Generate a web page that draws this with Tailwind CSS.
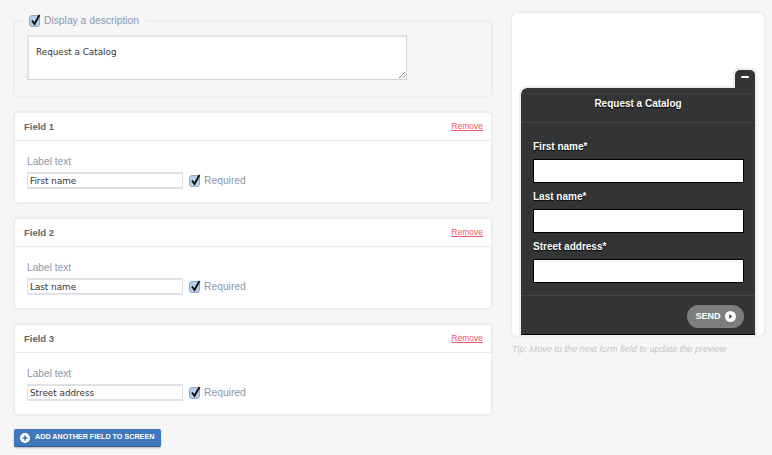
<!DOCTYPE html>
<html lang="en">
<head>
  <meta charset="UTF-8">
  <title>Request a Catalog</title>
  <script src="https://cdn.jsdelivr.net/npm/@tailwindcss/browser@4"></script>
</head>
<body class="bg-[#f6f6f6] font-['Liberation_Sans',sans-serif] overflow-hidden">
  <div class="w-[772px] h-[455px] flex items-start pl-[13px] pt-[13px] overflow-hidden">

    <!-- left column -->
    <div class="w-[480px] shrink-0">
      <fieldset class="border-2 border-[#eceef0] rounded-[5px] h-[85px] px-[12px]">
        <legend class="ml-[-4px] px-[6px] flex items-center h-[16px] text-[10.3px] text-[#8a97ae]">
          <span class="w-[11px] h-[12px] rounded-[3px] bg-[#b5d0ee] border border-[#8fa9c9] relative mr-[4px]">
            <svg class="absolute left-[0px] top-[-3px]" width="13" height="14" viewBox="0 0 13 14"><path d="M2 7.5 L4.5 11 L9.5 2" fill="none" stroke="#111" stroke-width="2"/></svg>
          </span>
          Display a description
        </legend>
        <div class="relative w-[380px] h-[45px] mt-[6px] bg-white border-2 border-[#e2e4e7] border-r-[#cfd2d6] border-b-[#cfd2d6] border-r border-b font-['DejaVu_Sans',sans-serif] text-[8.8px] text-[#333] pl-[7px] pt-[9px]">
          Request a Catalog
          <svg class="absolute right-0 bottom-0" width="8" height="8" viewBox="0 0 8 8"><path d="M1 7 L7 1 M4.5 7 L7 4.5" stroke="#888" stroke-width="1"/></svg>
        </div>
      </fieldset>

      <div class="flex flex-col gap-[13px] mt-[13px]">
        <section class="h-[93px] bg-white border-2 border-[#eceef0] rounded-[5px]">
          <div class="h-[28px] border-b border-[#e8eaed] flex items-center justify-between pl-[9px] pr-[8px]">
            <span class="text-[9.5px] font-bold text-[#666] pt-[1px]">Field 1</span>
            <a class="text-[8.5px] text-[#ee5566] underline">Remove</a>
          </div>
          <div class="pl-[12px] pt-[14px]">
            <div class="text-[10.2px] leading-[13px] text-[#8a97ae]">Label text</div>
            <div class="flex items-center mt-[4px]">
              <div class="w-[156px] h-[17px] bg-white border-2 border-[#dfe1e4] border-l border-r font-['DejaVu_Sans',sans-serif] text-[8.8px] leading-[13px] text-[#333] pl-[2px] pt-[1px]">First name</div>
              <span class="w-[11px] h-[12px] rounded-[3px] bg-[#b5d0ee] border border-[#8fa9c9] relative ml-[6px] mr-[4px]">
                <svg class="absolute left-[0px] top-[-3px]" width="13" height="14" viewBox="0 0 13 14"><path d="M2 7.5 L4.5 11 L9.5 2" fill="none" stroke="#111" stroke-width="2"/></svg>
              </span>
              <span class="text-[10.3px] text-[#8a97ae]">Required</span>
            </div>
          </div>
        </section>

        <section class="h-[93px] bg-white border-2 border-[#eceef0] rounded-[5px]">
          <div class="h-[28px] border-b border-[#e8eaed] flex items-center justify-between pl-[9px] pr-[8px]">
            <span class="text-[9.5px] font-bold text-[#666] pt-[1px]">Field 2</span>
            <a class="text-[8.5px] text-[#ee5566] underline">Remove</a>
          </div>
          <div class="pl-[12px] pt-[14px]">
            <div class="text-[10.2px] leading-[13px] text-[#8a97ae]">Label text</div>
            <div class="flex items-center mt-[4px]">
              <div class="w-[156px] h-[17px] bg-white border-2 border-[#dfe1e4] border-l border-r font-['DejaVu_Sans',sans-serif] text-[8.8px] leading-[13px] text-[#333] pl-[2px] pt-[1px]">Last name</div>
              <span class="w-[11px] h-[12px] rounded-[3px] bg-[#b5d0ee] border border-[#8fa9c9] relative ml-[6px] mr-[4px]">
                <svg class="absolute left-[0px] top-[-3px]" width="13" height="14" viewBox="0 0 13 14"><path d="M2 7.5 L4.5 11 L9.5 2" fill="none" stroke="#111" stroke-width="2"/></svg>
              </span>
              <span class="text-[10.3px] text-[#8a97ae]">Required</span>
            </div>
          </div>
        </section>

        <section class="h-[93px] bg-white border-2 border-[#eceef0] rounded-[5px]">
          <div class="h-[28px] border-b border-[#e8eaed] flex items-center justify-between pl-[9px] pr-[8px]">
            <span class="text-[9.5px] font-bold text-[#666] pt-[1px]">Field 3</span>
            <a class="text-[8.5px] text-[#ee5566] underline">Remove</a>
          </div>
          <div class="pl-[12px] pt-[14px]">
            <div class="text-[10.2px] leading-[13px] text-[#8a97ae]">Label text</div>
            <div class="flex items-center mt-[4px]">
              <div class="w-[156px] h-[17px] bg-white border-2 border-[#dfe1e4] border-l border-r font-['DejaVu_Sans',sans-serif] text-[8.8px] leading-[13px] text-[#333] pl-[2px] pt-[1px]">Street address</div>
              <span class="w-[11px] h-[12px] rounded-[3px] bg-[#b5d0ee] border border-[#8fa9c9] relative ml-[6px] mr-[4px]">
                <svg class="absolute left-[0px] top-[-3px]" width="13" height="14" viewBox="0 0 13 14"><path d="M2 7.5 L4.5 11 L9.5 2" fill="none" stroke="#111" stroke-width="2"/></svg>
              </span>
              <span class="text-[10.3px] text-[#8a97ae]">Required</span>
            </div>
          </div>
        </section>
      </div>

      <button class="mt-[13px] ml-[1px] w-[147px] h-[18px] rounded-[2px] bg-[#3f78bb] border-b border-[#2c5c96] shadow-[0_1px_2px_rgba(0,0,0,0.25)] flex items-center pl-[6px] text-white text-[7.2px] font-bold whitespace-nowrap">
        <svg class="mr-[5px] shrink-0" width="10" height="10" viewBox="0 0 10 10"><circle cx="5" cy="5" r="5" fill="#fff"/><path d="M5 2.5 V7.5 M2.5 5 H7.5" stroke="#3f78bb" stroke-width="1.6"/></svg>
        ADD ANOTHER FIELD TO SCREEN
      </button>
    </div>

    <!-- preview column -->
    <div class="w-[252px] ml-[19px] shrink-0">
      <div class="relative h-[323px] bg-white rounded-[5px] shadow-[0_0_3px_rgba(0,0,0,0.12)] pl-[9px] pr-[9px] pt-[75px]">
        <div class="relative h-[247px] bg-[#333436] rounded-tl-[6px] border-b border-black outline-2 outline-[#eeeeee] text-white">
          <div class="h-[35px] border-b border-[#444547]">
            <div class="h-[6px] border-b border-[#3f4042]"></div>
            <div class="text-center text-[10px] font-bold pt-[3px] leading-[13px] [text-shadow:0_1px_1px_#000]">Request a Catalog</div>
          </div>
          <div class="pl-[12px] pr-[11px] pt-[17px]">
            <div class="text-[10px] font-bold leading-[13px] [text-shadow:0_1px_1px_#000]">First name*</div>
            <div class="h-[24px] mt-[6px] bg-white border border-black"></div>
            <div class="text-[10px] font-bold leading-[13px] mt-[7px] [text-shadow:0_1px_1px_#000]">Last name*</div>
            <div class="h-[24px] mt-[6px] bg-white border border-black"></div>
            <div class="text-[10px] font-bold leading-[13px] mt-[7px] [text-shadow:0_1px_1px_#000]">Street address*</div>
            <div class="h-[24px] mt-[6px] bg-white border border-black"></div>
          </div>
          <div class="mt-[12px] border-t border-[#444547] flex justify-end pr-[11px] pt-[9px]">
            <div class="w-[57px] h-[23px] rounded-full bg-[#7d7e7e] flex items-center justify-center gap-[4px] text-[9px] font-bold">
              SEND
              <svg width="11" height="11" viewBox="0 0 11 11"><circle cx="5.5" cy="5.5" r="5.5" fill="#fff"/><path d="M4.2 3 L7.4 5.5 L4.2 8 Z" fill="#555"/></svg>
            </div>
          </div>
        </div>
        <!-- minimize tab -->
        <div class="absolute left-[223px] top-[57px] w-[20px] h-[18px] bg-[#333436] rounded-t-[5px] shadow-[0_-2px_0_#eeeeee,-2px_-2px_0_#eeeeee,2px_-2px_0_#eeeeee] flex justify-center pt-[6px]">
          <span class="w-[8px] h-[2px] bg-white rounded-[1px]"></span>
        </div>
      </div>
      <p class="mt-[7px] text-[9.1px] italic text-[#c4c6c9] leading-[12px] whitespace-nowrap">Tip: Move to the next form field to update the preview</p>
    </div>
  </div>
</body>
</html>
